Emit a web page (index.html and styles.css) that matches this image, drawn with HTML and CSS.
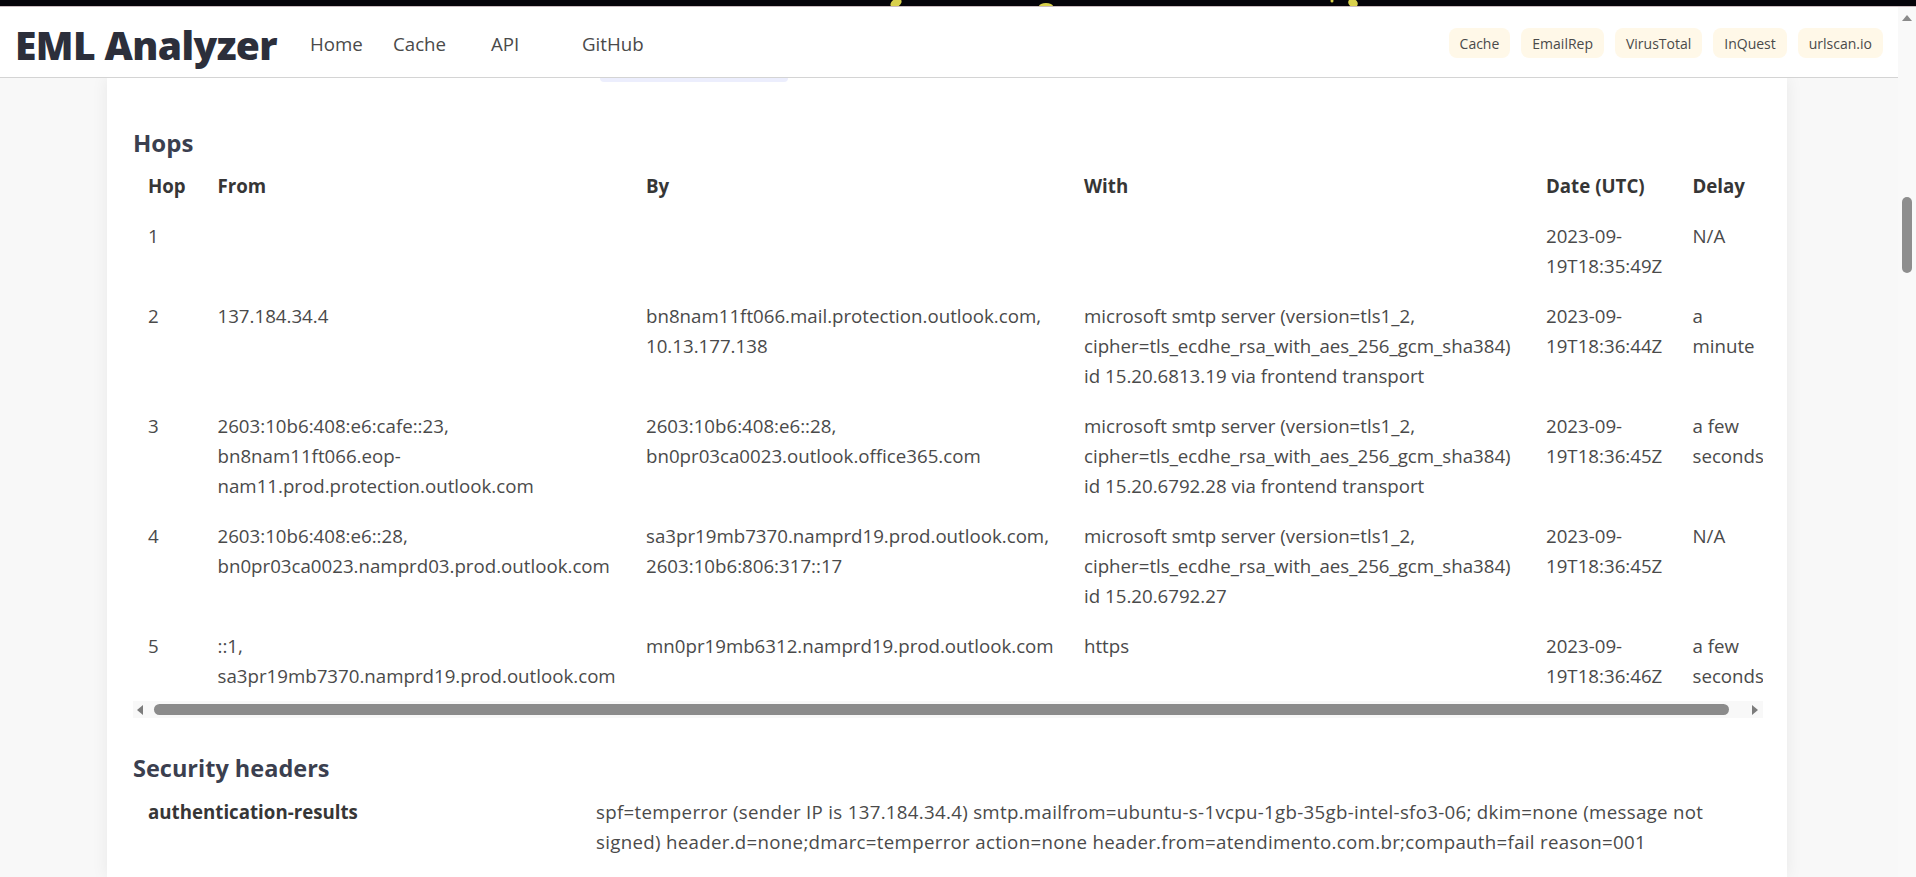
FILE: index.html
```html
<!DOCTYPE html>
<html lang="en">
<head>
<meta charset="utf-8">
<title>EML Analyzer</title>
<link rel="stylesheet" href="styles.css">
</head>
<body>
<div class="topstrip">
  <svg class="topstrip-art" width="1916" height="6" viewBox="0 0 1916 6" aria-hidden="true">
    <ellipse cx="896" cy="3" rx="6" ry="4" fill="#d8d04c" transform="rotate(-30 896 3)"/>
    <ellipse cx="1046" cy="6" rx="7" ry="3" fill="#d8d04c"/>
    <circle cx="1332" cy="1" r="1.5" fill="#d8d04c"/>
    <ellipse cx="1353" cy="3" rx="5" ry="4" fill="#d8d04c" transform="rotate(30 1353 3)"/>
  </svg>
</div>
<div class="window">
  <div class="viewport">
    <nav class="navbar">
      <div class="brand">EML Analyzer</div>
      <a class="nav-link nav-home">Home</a>
      <a class="nav-link nav-cache">Cache</a>
      <a class="nav-link nav-api">API</a>
      <a class="nav-link nav-github">GitHub</a>
      <div class="tags">
        <span class="tag">Cache</span>
        <span class="tag">EmailRep</span>
        <span class="tag">VirusTotal</span>
        <span class="tag">InQuest</span>
        <span class="tag">urlscan.io</span>
      </div>
    </nav>
    <main class="page">
      <section class="card">
        <div class="sliver"></div>
        <h2 class="section-title">Hops</h2>
        <div class="table-scroll">
          <div class="table-clip">
            <table class="hops">
              <colgroup>
                <col class="c-hop"><col class="c-from"><col class="c-by"><col class="c-with"><col class="c-date"><col class="c-delay">
              </colgroup>
              <thead>
                <tr><th>Hop</th><th>From</th><th>By</th><th>With</th><th>Date (UTC)</th><th>Delay</th></tr>
              </thead>
              <tbody>
                <tr><td>1</td><td></td><td></td><td></td><td>2023-09-<wbr>19T18:35:49Z</td><td>N/A</td></tr>
                <tr><td>2</td><td>137.184.34.4</td><td>bn8nam11ft066.mail.protection.outlook.com, 10.13.177.138</td><td>microsoft smtp server (version=tls1_2, cipher=tls_ecdhe_rsa_with_aes_256_gcm_sha384) id 15.20.6813.19 via frontend transport</td><td>2023-09-<wbr>19T18:36:44Z</td><td>a minute</td></tr>
                <tr><td>3</td><td>2603:10b6:408:e6:cafe::23, bn8nam11ft066.eop-<wbr>nam11.prod.protection.outlook.com</td><td>2603:10b6:408:e6::28, bn0pr03ca0023.outlook.office365.com</td><td>microsoft smtp server (version=tls1_2, cipher=tls_ecdhe_rsa_with_aes_256_gcm_sha384) id 15.20.6792.28 via frontend transport</td><td>2023-09-<wbr>19T18:36:45Z</td><td>a few seconds</td></tr>
                <tr><td>4</td><td>2603:10b6:408:e6::28, bn0pr03ca0023.namprd03.prod.outlook.com</td><td>sa3pr19mb7370.namprd19.prod.outlook.com, 2603:10b6:806:317::17</td><td>microsoft smtp server (version=tls1_2, cipher=tls_ecdhe_rsa_with_aes_256_gcm_sha384) id 15.20.6792.27</td><td>2023-09-<wbr>19T18:36:45Z</td><td>N/A</td></tr>
                <tr><td>5</td><td>::1, sa3pr19mb7370.namprd19.prod.outlook.com</td><td>mn0pr19mb6312.namprd19.prod.outlook.com</td><td>https</td><td>2023-09-<wbr>19T18:36:46Z</td><td>a few seconds</td></tr>
              </tbody>
            </table>
          </div>
          <div class="hscroll">
            <span class="harrow harrow-left"></span>
            <span class="hthumb"></span>
            <span class="harrow harrow-right"></span>
          </div>
        </div>
        <h2 class="section-title security-title">Security headers</h2>
        <table class="kv">
          <colgroup><col class="c-key"><col class="c-val"></colgroup>
          <tbody>
            <tr><th>authentication-results</th><td class="kv-value">spf=temperror (sender IP is 137.184.34.4) smtp.mailfrom=ubuntu-s-1vcpu-1gb-35gb-intel-sfo3-06; dkim=none (message not signed) header.d=none;dmarc=temperror action=none header.from=atendimento.com.br;compauth=fail reason=001</td></tr>
          </tbody>
        </table>
      </section>
    </main>
  </div>
  <div class="vscroll">
    <span class="varrow"></span>
    <span class="vthumb"></span>
  </div>
</div>
</body>
</html>
```
FILE: styles.css
```css
* { box-sizing: border-box; }

html, body {
  margin: 0;
  padding: 0;
}

body {
  height: 877px;
  overflow: hidden;
  font-family: "Open Sans", "Noto Sans", sans-serif;
  font-size: 18.7px;
  color: #4a4a4a;
  background: #f8f8f8;
}

.topstrip {
  height: 7px;
  background: #05040a;
  border-bottom: 1px solid #cbbcc0;
  overflow: hidden;
}

.topstrip-art { display: block; }

.window {
  display: flex;
  height: 870px;
}

.viewport {
  flex: 1;
  min-width: 0;
  display: flex;
  flex-direction: column;
}

/* navbar */
.navbar {
  height: 71px;
  flex: none;
  background: #fff;
  border-bottom: 1px solid #d4d4d4;
  display: flex;
  align-items: center;
  padding: 0 15px;
}

.brand {
  width: 295px;
  flex: none;
  font-size: 39px;
  font-weight: 800;
  color: #2c2f3b;
  letter-spacing: -0.6px;
  white-space: nowrap;
  padding-top: 5px;
}

.nav-link {
  flex: none;
  color: #4a4a4a;
  font-size: 18.7px;
  text-decoration: none;
  padding-top: 2px;
}

.nav-home { width: 83px; }
.nav-cache { width: 98px; }
.nav-api { width: 91px; }
.nav-github { width: 80px; }

.tags {
  margin-left: auto;
  display: flex;
  gap: 11px;
  padding-top: 2px;
}

.tag {
  height: 30px;
  padding: 0 11px;
  display: flex;
  align-items: center;
  font-size: 14px;
  color: #4a4a4a;
  background: #fff8e8;
  border-radius: 8px;
  white-space: nowrap;
}

/* page */
.page {
  flex: 1;
  background: #f8f8f8;
  padding-left: 107px;
  overflow: hidden;
}

.card {
  width: 1680px;
  height: 100%;
  background: #fff;
  box-shadow: 0 0 16px rgba(10, 10, 10, 0.07);
  padding: 0 24px 0 26px;
}

.sliver {
  margin-left: 467px;
  width: 188px;
  height: 4px;
  background: #eceefd;
  border-radius: 0 0 6px 6px;
}

.section-title {
  margin: 45px 0 3px;
  font-size: 24px;
  line-height: 31px;
  font-weight: 700;
  color: #3b3f4f;
}

.security-title {
  margin-top: 35px;
  font-size: 23.5px;
}

/* hops table */
.table-clip {
  overflow: hidden;
  width: 1630px;
}

.hops {
  width: 1645px;
  table-layout: fixed;
  border-collapse: collapse;
}

.c-hop { width: 69.5px; }
.c-from { width: 428.5px; }
.c-by { width: 438px; }
.c-with { width: 462px; }
.c-date { width: 146.5px; }
.c-delay { width: 100.5px; }

.hops th,
.hops td,
.kv th,
.kv td {
  padding: 10px 15px;
  line-height: 30px;
  text-align: left;
  vertical-align: top;
  font-weight: 400;
}

.hops th,
.kv th {
  font-weight: 700;
  color: #363636;
}

.hscroll {
  width: 1630px;
  height: 17px;
  background: #f8f8f8;
  display: flex;
  align-items: center;
  padding: 0 5px 0 4px;
}

.harrow {
  width: 0;
  height: 0;
  border-top: 5px solid transparent;
  border-bottom: 5px solid transparent;
}

.harrow-left {
  border-right: 6px solid #7c7c7c;
}

.harrow-right {
  border-left: 6px solid #7c7c7c;
}

.hthumb {
  flex: 1;
  height: 11px;
  margin: 0 23px 0 11px;
  background: #8b8b8b;
  border-radius: 6px;
}

/* security table */
.kv {
  width: 1600px;
  table-layout: fixed;
  border-collapse: collapse;
}

.c-key { width: 448px; }

.kv-value { letter-spacing: 0.3px; }

/* page scrollbar */
.vscroll {
  width: 18px;
  flex: none;
  background: #f9f9f9;
  display: flex;
  flex-direction: column;
  align-items: center;
}

.varrow {
  margin-top: 8px;
  width: 0;
  height: 0;
  border-left: 5px solid transparent;
  border-right: 5px solid transparent;
  border-bottom: 6px solid #8a8a8a;
}

.vthumb {
  margin-top: 176px;
  width: 10px;
  height: 76px;
  background: #8e8e8e;
  border-radius: 5px;
}
```
